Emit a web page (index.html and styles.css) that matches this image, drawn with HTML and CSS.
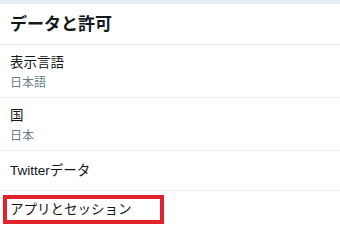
FILE: index.html
```html
<!DOCTYPE html>
<html lang="ja">
  <head>
    <meta charset="UTF-8" />
    <title>データと許可</title>
    <link rel="stylesheet" href="styles.css">
  </head>
  <body>
    <div class="topbar"></div>
    <div class="header">データと許可</div>
    <div class="row">
      <div class="label">表示言語</div>
      <div class="sub">日本語</div>
    </div>
    <div class="row">
      <div class="label">国</div>
      <div class="sub">日本</div>
    </div>
    <div class="row single">
      <div class="label">Twitterデータ</div>
    </div>
    <div class="row last">
      <div class="marked">アプリとセッション</div>
    </div>
  </body>
</html>
```
FILE: styles.css
```css
body {
  margin: 0;
  background: white;
  font-family: "Liberation Sans", "Noto Sans CJK JP", sans-serif;
  color: #14171a;
  overflow: hidden;
}
.topbar {
  height: 4px;
  background: #e6ecf0;
}
.header {
  height: 40px;
  line-height: 41px;
  padding-left: 10px;
  font-size: 17px;
  font-weight: bold;
  border-bottom: 1px solid #e6ecf0;
}
.row {
  height: 53px;
  padding-left: 10px;
  box-sizing: border-box;
  padding-top: 9px;
  border-bottom: 1px solid #e6ecf0;
}
.label {
  font-size: 13.5px;
  line-height: 18px;
}
.sub {
  margin-top: 3px;
  font-size: 12px;
  line-height: 16px;
  color: #6b7c8a;
}
.row.single {
  height: 40px;
  padding-top: 11px;
}
.row.last {
  height: auto;
  border-bottom: none;
  padding: 4px 0 0 3px;
}
.marked {
  width: 161px;
  height: 29px;
  box-sizing: border-box;
  border: 4px solid #e1242b;
  padding-left: 3px;
  font-size: 13.5px;
  line-height: 21px;
}
```
